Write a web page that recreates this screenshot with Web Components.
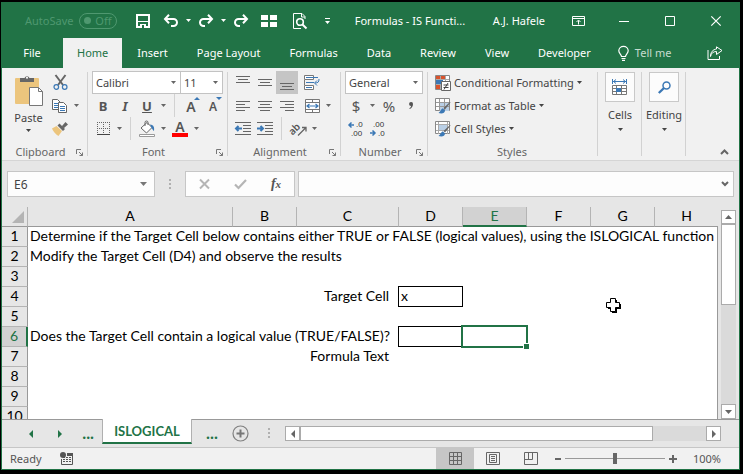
<!DOCTYPE html>
<html lang="en">
<head>
<meta charset="utf-8">
<title>Formulas - IS Functions</title>
<style>
  html, body { height: 100%; }
  body {
    margin: 0; padding: 2px 3px 4px 1px; box-sizing: border-box; background: #000;
    font: 11px/16px "Noto Sans", "Open Sans", sans-serif; color: #444;
    --green: #217346; --ribbon: #f1f1f1; --chrome: #e6e6e6; --line: #c6c6c6; --ink: #595959;
    --sheet-font: Lato, "Open Sans", sans-serif;
  }
</style>
</head>
<body>
<xl-window>
  <xl-titlebar user="A.J. Hafele">Formulas - IS Functi...</xl-titlebar>
  <xl-menu></xl-menu>
  <xl-ribbon></xl-ribbon>
  <xl-formula-bar cell="E6"></xl-formula-bar>
  <xl-sheet></xl-sheet>
  <xl-sheet-tabs>ISLOGICAL</xl-sheet-tabs>
  <xl-status>Ready</xl-status>
</xl-window>

<script>
const BASE = `
  :host, *, *::before, *::after { box-sizing: border-box; }
  button { font: inherit; color: inherit; background: none; border: 0; padding: 0; margin: 0;
    display: inline-flex; align-items: center; justify-content: center; white-space: nowrap; }
  select, input { font: inherit; color: inherit; border-radius: 0; margin: 0; outline: 0; }
`;
function define(name, css, html) {
  customElements.define(name, class extends HTMLElement {
    constructor() {
      super();
      this.attachShadow({ mode: 'open' }).innerHTML =
        `<style>${BASE}${css}</style>` + (typeof html === 'function' ? html(this) : html);
    }
  });
}

/* Icons: [width, height, markup] */
const G = '#666';
const lines = (a, c = G) => a.map(([x, y, w]) => `<rect x="${x}" y="${y}" width="${w}" height="1" fill="${c}"/>`).join('');
const brush = `<path d="M15.500 4.500 10 11.500l-1.500-1.500L15 4z" fill="#666"/><path d="M8 10.500c-2 0-2 2.500-4.500 4.500 3 1 6.500.5 6.500-2.500z" fill="#3b78b5"/>`;
const ICONS = {
  save: [14, 14, `<path d="M1 1h12v12H1z" fill="none" stroke="#fff" stroke-width="2"/><path d="M2 7h10v1H2zM4 10h6v4H4z" fill="#fff"/><path d="M6 11h2v3H6z" fill="#217346"/>`],
  undo: [16, 13, `<path d="M2 5h8.500a3.500 3.500 0 0 1 0 7H8" fill="none" stroke="#fff" stroke-width="2"/><path d="M6 .8 2 5l4 4.200" fill="none" stroke="#fff" stroke-width="2"/>`],
  redo: [16, 13, `<path d="M14 5H5.500a3.500 3.500 0 0 0 0 7H7" fill="none" stroke="#fff" stroke-width="2"/><path d="M10 .8 14 5l-4 4.200" fill="none" stroke="#fff" stroke-width="2"/>`],
  freeze: [16, 12, `<path d="M0 0h7v5H0zM9 0h7v5H9zM0 7h7v5H0zM9 7h7v5H9z" fill="#fff"/>`],
  preview: [14, 16, `<path d="M12 6V3.500L9 .5H.5v15H8" fill="none" stroke="#fff"/><path d="M8.500 1v3H12" fill="none" stroke="#fff"/><circle cx="7" cy="9" r="3.300" fill="none" stroke="#fff" stroke-width="1.600"/><path d="m9.500 11.500 4 4" stroke="#fff" stroke-width="2"/>`],
  more: [5, 6, `<path d="M0 0h5v1H0zM0 3h5L2.500 6z" fill="#fff"/>`],
  caret: [5, 3, `<path d="M0 0h5L2.500 3z" fill="currentColor"/>`],
  ribbonopt: [13, 10, `<path d="M.5.5h12v9H.5zM1 2.500h11" fill="none" stroke="#fff"/><path d="M6.500 8.500v-4M4.500 6l2-2 2 2" fill="none" stroke="#fff"/>`],
  min: [10, 10, `<path d="M0 5h10v1H0z" fill="#fff"/>`],
  max: [10, 10, `<path d="M.5.500h9v9h-9z" fill="none" stroke="#fff"/>`],
  close: [10, 10, `<path d="m.3.300 9.400 9.400M9.700.300.300 9.700" stroke="#fff" stroke-width="1.200"/>`],
  bulb: [11, 15, `<path d="M3.500 10.500C3.500 8.500.8 7.500.8 4.800a4.500 4.300 0 0 1 9.400 0c0 2.700-2.700 3.700-2.700 5.700zM3.500 12.500h4M4 14.300h3" fill="none" stroke="#fff" stroke-width="1.200"/>`],
  share: [16, 14, `<path d="M1 4v9.500h11.500V10" fill="none" stroke="#fff"/><path d="M3.500 10.500c.5-3.500 3-5 6-5V8.500l5.500-4L9.500.8V3C6 3.500 3.500 6 3.500 10.500z" fill="none" stroke="#fff"/>`],
  paste: [28, 32, `<rect y="3" width="24" height="26" rx="1" fill="#ecc57d"/><path d="M5 7V3h4.500a2.700 2.700 0 0 1 5 0H19v4z" fill="#666"/><circle cx="12" cy="2.800" r="1" fill="#fff"/><path d="M14.500 12.500h9l4 4v14h-13z" fill="#fff" stroke="#777"/><path d="M23.500 12.500v4h4" fill="none" stroke="#777"/>`],
  cut: [15, 15, `<path d="M2.500 0 10 10M12.500 0 5 10" stroke="#666" stroke-width="2"/><circle cx="3.300" cy="12" r="2.300" fill="none" stroke="#3b78b5" stroke-width="1.200"/><circle cx="11.700" cy="12" r="2.300" fill="none" stroke="#3b78b5" stroke-width="1.200"/>`],
  copy: [16, 14, `<path d="M.5.500h5l3 3v7h-8z" fill="#fff" stroke="#666"/><path d="M2 4.500h4M2 6.500h4M2 8.500h4" stroke="#3b78b5"/><path d="M6.500 3.500h5l3 3v7h-8z" fill="#fff" stroke="#666"/><path d="M8 7.500h5M8 9.500h5M8 11.500h5" stroke="#3b78b5"/>`],
  painter: [16, 14, `<path d="M0 6.500 4.500 4l5.500 5-3.500 5C4 12.500 1.500 10 0 6.500z" fill="#ecc57d"/><path d="m5.500 3.500 5.500 5.500 2-2L7.500 1.500zM10 4 13.500 0 16 2.500 12 6z" fill="#666"/>`],
  borders: [13, 13, `<path d="M.5 0v13M6.500 0v13M12.500 0v13M0 .5h13M0 6.500h13" stroke="#666" stroke-dasharray="1 1"/><path d="M0 12h13v1H0z" fill="#444"/>`],
  fill: [16, 16, `<path d="m2 7 6-5.500 5 5L7.500 12z" fill="#fff" stroke="#666"/><path d="M6 5V1.500a1.500 1.500 0 0 1 3 0V4" fill="none" stroke="#666"/><path d="M11 3.500c4 .5 4.500 3 4 6.500-1-.5-1.500-2-2.500-3z" fill="#3b78b5"/><path d="M.5 13.500h15v2H.5z" fill="#fff" stroke="#999"/>`],
  top: [14, 15, lines([[0, 1, 14], [2, 4, 10], [0, 7, 14]])],
  middle: [14, 15, lines([[0, 4, 14], [2, 7, 10], [0, 10, 14]])],
  bottom: [14, 15, lines([[0, 8, 14], [2, 11, 10], [0, 14, 14]])],
  left: [14, 11, lines([[0, 1, 14], [0, 4, 9], [0, 7, 14], [0, 10, 9]])],
  center: [14, 11, lines([[0, 1, 14], [2, 4, 10], [0, 7, 14], [2, 10, 10]])],
  right: [14, 11, lines([[0, 1, 14], [5, 4, 9], [0, 7, 14], [5, 10, 9]])],
  wrap: [16, 15, `<path d="M.5.5h9v4h-9zM.5 10.500h9v4h-9zM.5 5v5" fill="#fff" stroke="#777"/><path d="M2 2.500h12M2 7.500h8M2 12.500h6" stroke="#3b78b5"/><path d="M15 4c0 3-1 4-4 4M13 5.500 10.500 8l2.500 2.500" fill="none" stroke="#3b78b5"/>`],
  merge: [15, 14, `<path d="M.5.5h14v13H.5zM.5 3.500h14M.5 10.500h14M7.500.5v3M7.500 10.500v3" fill="#fff" stroke="#777"/><path d="M2 7h11M4.500 5 2 7l2.500 2M10.500 5 13 7l-2.500 2" fill="none" stroke="#3b78b5" stroke-width="1.200"/>`],
  outdent: [16, 13, lines([[0, 0, 16], [8, 3, 8], [8, 6, 8], [8, 9, 8], [0, 12, 16]]) + `<path d="M7 6.500H1M3.500 4 1 6.500 3.500 9" fill="none" stroke="#3b78b5" stroke-width="2"/>`],
  indent: [16, 13, lines([[0, 0, 16], [8, 3, 8], [8, 6, 8], [8, 9, 8], [0, 12, 16]]) + `<path d="M0 6.500h6M3.500 4 6 6.500 3.500 9" fill="none" stroke="#3b78b5" stroke-width="2"/>`],
  orient: [17, 16, `<text x="-2" y="10" transform="rotate(-45 6 7)" font-family="Noto Sans, sans-serif" font-size="10" font-weight="600" fill="#555">ab</text><path d="M8 14.500 15.500 7M12 6.500h4v4" fill="none" stroke="#666" stroke-width="1.300"/>`],
  comma: [4, 7, `<path d="M2 0a1.900 1.900 0 0 1 2 2c0 2.500-1.200 4-3.200 5L.3 6.200C1.500 5.600 2 4.800 2 3.900A1.900 1.900 0 0 1 2 0z" fill="#555"/>`],
  decinc: [16, 16, `<path d="M6 4H1M3.500 1.500 1 4l2.500 2.500" fill="none" stroke="#3b78b5" stroke-width="1.500"/><g font-family="Liberation Sans, sans-serif" font-size="8" fill="#333"><text x="8" y="6">.0</text><text x="3" y="15">.00</text></g>`],
  decdec: [16, 16, `<path d="M0 12h5M2.500 9.500 5 12l-2.500 2.500" fill="none" stroke="#3b78b5" stroke-width="1.500"/><g font-family="Liberation Sans, sans-serif" font-size="8" fill="#333"><text x="3" y="6">.00</text><text x="8" y="15">.0</text></g>`],
  cond: [16, 16, `<path d="M.5.500h14v14H.5z" fill="#fff" stroke="#888"/><path d="M5.500 1v13M10.500 1v13M1 4.500h13M1 9.500h13" stroke="#aaa"/><path d="M1 1h4v3H1zM6 1h4v3H6zM1 10h4v4H1z" fill="#d9532c"/><path d="M1 5h7v4H1z" fill="#3b78b5"/><path d="M6.500 6.500h9v9h-9z" fill="#fff" stroke="#666"/><path d="M8.500 10h5M8.500 12.500h5M13 8l-4 6.500" stroke="#444"/>`],
  table: [16, 16, `<path d="M.5.500h14v12H.5z" fill="#fff" stroke="#888"/><path d="M5 5h9v8H5z" fill="#b9cfe6"/><path d="M4.500 1v12M9.500 1v12M1 4.500h13M1 8.500h13" stroke="#999"/>${brush}`],
  cellstyle: [16, 16, `<path d="M.5.500h14v12H.5z" fill="#fff" stroke="#888"/><path d="M4 4h8v6H4z" fill="#b9cfe6"/><path d="M3.500 1v12M12.500 1v12M1 3.500h13M1 9.500h13" stroke="#aaa"/>${brush}`],
  cells: [16, 17, `<path d="M1 2.500h13M4 .5 1.500 2.500 4 4.500M11 .5l2.500 2L11 4.500M.5 0v5M14.500 0v5" fill="none" stroke="#3b78b5"/><path d="M.5 6.500h14v9H.5zM4.500 6.500v9M9.500 6.500v9M.5 9.500h14M.5 12.500h14" fill="#fff" stroke="#777"/><path d="M4 9h5v4H4z" fill="#3b78b5"/>`],
  find: [13, 13, `<circle cx="8.500" cy="4.500" r="3.500" fill="none" stroke="#3b78b5" stroke-width="1.500"/><path d="M6 7 .8 12" stroke="#3b78b5" stroke-width="2.400"/>`],
  launcher: [7, 7, `<path d="M.5 5V.500H5M3 3l3.500 3.500M6.500 3.500v3h-3" fill="none" stroke="#777"/>`],
  up: [9, 6, `<path d="m1 5 3.500-3.500L8 5" fill="none" stroke="#666" stroke-width="2"/>`],
  down: [8, 6, `<path d="m1 1 3 3 3-3" fill="none" stroke="#666" stroke-width="2"/>`],
  cancel: [11, 10, `<path d="m1 .5 9 9M10 .5l-9 9" stroke="#b5b5b5" stroke-width="2"/>`],
  enter: [13, 10, `<path d="m1 5.500 3.500 3.500L12 1" fill="none" stroke="#b5b5b5" stroke-width="2.200"/>`],
  dots: [2, 11, `<path d="M0 0h2v2H0zM0 4h2v2H0zM0 8h2v2H0z" fill="#b0b0b0"/>`],
  prev: [4, 8, `<path d="M4 0v8L0 4z" fill="currentColor"/>`],
  next: [4, 8, `<path d="M0 0v8l4-4z" fill="currentColor"/>`],
  drop: [7, 4, `<path d="M0 0h7L3.500 4z" fill="#777"/>`],
  sup: [7, 4, `<path d="M0 4h7L3.500 0z" fill="#666"/>`],
  sdown: [7, 4, `<path d="M0 0h7L3.500 4z" fill="#666"/>`],
  add: [17, 17, `<circle cx="8.500" cy="8.500" r="7.500" fill="none" stroke="#808080" stroke-width="1.200"/><path d="M4.500 7.500h8v2h-8zM7.500 4.500h2v8h-2z" fill="#777"/>`],
  macro: [13, 13, `<circle cx="3" cy="3" r="3" fill="#555"/><path d="M7 1h6v3H7z" fill="#555"/><path d="M1.500 7v5.500h11V4" fill="none" stroke="#555"/><path d="M3 7.500h8M3 9.500h8M3 5.500h8" stroke="#555" stroke-dasharray="2 1"/>`],
  normal: [13, 13, `<path d="M.5.500h12v12H.5zM4.500.500v12M8.500.500v12M.5 4.500h12M.5 8.500h12" fill="none" stroke="#666"/>`],
  page: [14, 13, `<path d="M.5.500h13v12H.5zM3.500 2.500h7v8h-7z" fill="none" stroke="#666"/><path d="M5 4.500h4M5 6.500h4M5 8.500h4" stroke="#666"/>`],
  breaks: [14, 13, `<path d="M.5.500h13v12H.5zM4.500.500v7M.5 7.500h8v-7" fill="none" stroke="#666"/>`],
  minus: [6, 6, `<path d="M0 2h6v2H0z" fill="#666"/>`],
  plus: [8, 8, `<path d="M0 3h8v2H0zM3 0h2v8H3z" fill="#666"/>`],
  corner: [12, 12, `<path d="M12 0v12H0z" fill="#b4b4b4"/>`],
  cross: [15, 15, `<path d="M5 1h5v4h4v5h-4v4H5v-4H1V5h4z" transform="translate(1 1)" fill="#000"/><path d="M4.500.500h5v4h4v5h-4v4h-5v-4h-4v-5h4z" fill="#fff" stroke="#000"/>`],
};
customElements.define('xl-icon', class extends HTMLElement {
  constructor() {
    super();
    const [w, h, body] = ICONS[this.getAttribute('name')];
    this.attachShadow({ mode: 'open' }).innerHTML =
      `<style>:host { display: inline-block; line-height: 0; flex: none; } svg { display: block; overflow: visible; }</style>
       <svg width="${w}" height="${h}" viewBox="0 0 ${w} ${h}" aria-hidden="true">${body}</svg>`;
  }
});
const icon = n => `<xl-icon name="${n}"></xl-icon>`;
const btn = (n, label, cls = '') => `<button class="${cls}" aria-label="${label}">${icon(n)}</button>`;
const caret = label => btn('caret', label + ' options', 'caret');

define('xl-window', `
  :host { display: flex; flex-direction: column; height: 100%;
    border: 1px solid var(--green); background: var(--chrome); overflow: hidden; }
`, '<slot></slot>');

define('xl-titlebar', `
  :host { display: flex; align-items: center; height: 35px; flex: none; background: var(--green); color: #fff; padding-left: 23px; }
  .auto { display: flex; align-items: center; gap: 6px; width: 104px; color: #4f9870; }
  .toggle { width: 38px; height: 16px; border: 1px solid #4f9870; border-radius: 8px; justify-content: space-between; padding: 0 5px 0 4px; }
  .toggle::before { content: ""; width: 7px; height: 7px; border-radius: 50%; background: #4f9870; }
  .qat { display: grid; grid-template-columns: 28px 28px 7px 28px 7px 28px 28px 34px 20px; height: 100%; }
  .name { flex: 1; text-align: center; white-space: nowrap; padding-right: 10px; }
  .user { margin-right: 10px; white-space: nowrap; }
  .win { width: 46px; height: 30px; }
`, h => `
  <div class="auto"><span id="a">AutoSave</span><button class="toggle" aria-labelledby="a">Off</button></div>
  <div class="qat">${btn('save', 'Save')}${btn('undo', 'Undo')}${caret('Undo')}${btn('redo', 'Redo')}${caret('Redo')}${btn('redo', 'Repeat')}${btn('freeze', 'Freeze panes')}${btn('preview', 'Print preview')}${btn('more', 'Customize')}</div>
  <div class="name"><slot></slot></div>
  <div class="user">${h.getAttribute('user')}</div>
  ${btn('ribbonopt', 'Ribbon display', 'win')}${btn('min', 'Minimize', 'win')}${btn('max', 'Maximize', 'win')}${btn('close', 'Close', 'win')}`);

define('xl-menu', `
  :host { display: flex; height: 30px; flex: none; background: var(--green); color: #fff; gap: 1px; }
  button { padding: 0 14px; }
  .file { width: 60px; }
  .on { background: var(--ribbon); color: var(--green); }
  .tell { gap: 6px; color: #c6dccf; padding: 0 12px; }
  .share { margin-left: auto; padding: 0 16px; }
`, `<button class="file">File</button><button class="on">Home</button>` +
  ['Insert', 'Page Layout', 'Formulas', 'Data', 'Review', 'View', 'Developer'].map(t => `<button>${t}</button>`).join('') +
  `<button class="tell">${icon('bulb')}Tell me</button>${btn('share', 'Share', 'share')}`);

define('xl-group', `
  :host { display: flex; flex-direction: column; flex: none; padding-top: 3px; height: 92px; position: relative; color: #666; }
  :host::after { content: ""; position: absolute; right: 0; top: 4px; bottom: 4px; width: 1px; background: #d2d2d2; }
  .body { flex: 1; }
  .foot { display: flex; align-items: center; height: 16px; padding: 0 5px 0 0; }
  .foot span { flex: 1; text-align: center; padding-left: 3px; }
`, h => `<div class="body"><slot></slot></div>
  <div class="foot">${h.hasAttribute('label') ? `<span>${h.getAttribute('label')}</span>` : ''}${h.hasAttribute('dialog') ? btn('launcher', h.getAttribute('label') + ' settings') : ''}</div>`);

define('xl-ribbon', `
  :host { display: flex; height: 93px; flex: none; background: var(--ribbon); border-bottom: 1px solid #d5d5d5; color: #444; }
  .row { display: flex; align-items: center; height: 23px; }
  .pad { padding: 0 4px; }
  .t { width: 22px; height: 23px; color: #555; }
  .caret { width: 11px; height: 22px; color: #666; }
  .sel { background: #c5c5c5; }
  .sep { width: 1px; height: 23px; background: #d2d2d2; margin: 0 5px; }
  .gap { margin-left: 3px; }
  .clip { display: grid; grid-template-columns: 47px 1fr; }
  .paste { flex-direction: column; justify-content: flex-start; padding: 4px 0 0 6px; gap: 3px; color: #444; }
  .combo { position: relative; display: flex; align-items: center; height: 23px; }
  .combo + .combo { margin-left: -1px; }
  .combo xl-icon { position: absolute; right: 5px; color: #666; pointer-events: none; }
  select { appearance: none; width: 100%; height: 23px; border: 1px solid #c3c3c3; background: #fff; padding: 0 3px; color: #444; }
  .glyph { font-size: 13px; font-weight: 700; }
  .sz { position: relative; font-weight: 600; align-items: flex-end; line-height: 20px; }
  .sz::after { content: ""; position: absolute; right: 2px; top: 3px; border: 3px solid transparent; border-top: 0; border-bottom-color: #3b78b5; }
  .sz.dn::after { border-bottom: 0; border-top: 3px solid #3b78b5; }
  .big { font-size: 14px; } .small { font-size: 12px; }
  .color { flex-direction: column; font-size: 14px; line-height: 13px; font-weight: 600; }
  .color::after { content: ""; width: 16px; height: 4px; background: #f00; }
  .num { font-size: 15px; }
  .style { gap: 3px; height: 23px; color: #444; }
  .tall { flex-direction: column; width: 100%; padding-top: 1px; color: #444; gap: 5px; }
  .tile { width: 30px; height: 30px; border: 1px solid #c9c9c9; background: #fcfcfc; display: flex; align-items: center; justify-content: center; }
  .collapse { margin: auto 9px 2px auto; width: 12px; height: 12px; }
`, `
  <xl-group label="Clipboard" dialog style="width:86px"><div class="clip">
    <button class="paste">${icon('paste')}<span>Paste</span>${icon('caret')}</button>
    <div><div class="row">${btn('cut', 'Cut', 't')}</div><div class="row">${btn('copy', 'Copy', 't')}${caret('Copy')}</div><div class="row">${btn('painter', 'Format painter', 't')}</div></div>
  </div></xl-group>
  <xl-group label="Font" dialog style="width:140px"><div class="pad">
    <div class="row"><div class="combo" style="width:89px"><select aria-label="Font"><option>Calibri</option></select>${icon('caret')}</div><div class="combo" style="width:43px"><select aria-label="Font size"><option>11</option></select>${icon('caret')}</div></div>
    <div class="row"><button class="t glyph">B</button><button class="t glyph"><i>I</i></button><button class="t glyph"><u>U</u></button>${caret('Underline')}<span class="sep"></span><button class="t sz big">A</button><button class="t sz dn small">A</button></div>
    <div class="row">${btn('borders', 'Borders', 't')}${caret('Borders')}<span class="sep"></span>${btn('fill', 'Fill color', 't')}${caret('Fill')}<button class="t color">A</button>${caret('Font color')}</div>
  </div></xl-group>
  <xl-group label="Alignment" dialog style="width:113px"><div class="pad">
    <div class="row">${btn('top', 'Top align', 't')}${btn('middle', 'Middle align', 't')}${btn('bottom', 'Bottom align', 't sel')}${btn('wrap', 'Wrap text', 't gap')}</div>
    <div class="row">${btn('left', 'Align left', 't')}${btn('center', 'Center', 't')}${btn('right', 'Align right', 't')}${btn('merge', 'Merge and center', 't gap')}${caret('Merge')}</div>
    <div class="row">${btn('outdent', 'Decrease indent', 't')}${btn('indent', 'Increase indent', 't')}<span class="sep"></span>${btn('orient', 'Orientation', 't')}${caret('Orientation')}</div>
  </div></xl-group>
  <xl-group label="Number" dialog style="width:87px"><div class="pad">
    <div class="row"><div class="combo" style="width:78px"><select aria-label="Number format"><option>General</option></select>${icon('caret')}</div></div>
    <div class="row"><button class="t num">$</button>${caret('Currency')}<button class="t num">%</button>${btn('comma', 'Comma style', 't')}</div>
    <div class="row">${btn('decinc', 'Increase decimal', 't')}${btn('decdec', 'Decrease decimal', 't')}</div>
  </div></xl-group>
  <xl-group label="Styles" style="width:170px"><div style="padding-left:7px">
    <div class="row"><button class="style">${icon('cond')}Conditional Formatting${icon('caret')}</button></div>
    <div class="row"><button class="style">${icon('table')}Format as Table${icon('caret')}</button></div>
    <div class="row"><button class="style">${icon('cellstyle')}Cell Styles${icon('caret')}</button></div>
  </div></xl-group>
  <xl-group style="width:44px"><button class="tall"><span class="tile">${icon('cells')}</span>Cells${icon('caret')}</button></xl-group>
  <xl-group style="width:44px"><button class="tall"><span class="tile">${icon('find')}</span>Editing${icon('caret')}</button></xl-group>
  ${btn('up', 'Collapse ribbon', 'collapse')}`);

define('xl-formula-bar', `
  :host { display: flex; flex: none; padding: 10px 5px; background: var(--chrome); }
  .box { height: 26px; border: 1px solid var(--line); background: #fdfdfd; display: flex; align-items: center; }
  input { border: 0; background: none; min-width: 0; flex: 1; height: 100%; padding: 0 6px; color: #444; font-size: 12px; }
  .name { width: 148px; padding-right: 7px; }
  .grip { width: 30px; display: flex; justify-content: center; align-items: center; }
  .acts { width: 110px; margin-right: 3px; }
  .acts button { flex: 1; }
  .fx { font: italic 700 14px/16px "Liberation Serif", serif; color: #555; }
  .fx small { font-size: 11px; }
  .formula { flex: 1; padding-right: 4px; }
`, h => `
  <div class="box name"><input aria-label="Name box" value="${h.getAttribute('cell')}">${icon('drop')}</div>
  <div class="grip">${icon('dots')}</div>
  <div class="box acts">${btn('cancel', 'Cancel')}${btn('enter', 'Enter')}<button class="fx">f<small>x</small></button></div>
  <div class="box formula"><input aria-label="Formula">${btn('down', 'Expand formula bar')}</div>`);

const cols = 'ABCDEFGH'.split('');
const empty = n => '<td></td>'.repeat(n);
const rows = {
  1: '<td colspan="8">Determine if the Target Cell below contains either TRUE or FALSE (logical values), using the ISLOGICAL function</td>',
  2: '<td colspan="8">Modify the Target Cell (D4) and observe the results</td>',
  4: '<td colspan="3" class="r">Target Cell</td><td class="box">x</td>' + empty(4),
  6: '<td colspan="3" class="r">Does the Target Cell contain a logical value (TRUE/FALSE)?</td><td class="box"></td><td class="cur"></td>' + empty(3),
  7: '<td colspan="3" class="r">Formula Text</td>' + empty(5),
};
define('xl-sheet', `
  :host { display: flex; flex: 1; min-height: 0; background: var(--chrome); }
  .view { flex: 1; overflow: hidden; min-width: 0; position: relative; }
  table { table-layout: fixed; border-collapse: separate; border-spacing: 0; width: 100%; font: 14px/17px var(--sheet-font); color: #000; }
  th, td { padding: 0; height: 20px; font-weight: 400; white-space: nowrap; vertical-align: top; }
  thead th { background: var(--chrome); border-bottom: 1px solid #999; border-right: 1px solid #b4b4b4; }
  thead th:last-child { border-right: 0; }
  thead th.on { background: #d2d2d2; color: var(--green); border-bottom: 2px solid var(--green); }
  thead xl-icon { display: block; margin: 4px 0 0 10px; }
  tbody th { background: var(--chrome); border-bottom: 1px solid #b4b4b4; border-right: 1px solid #999; }
  tbody th.on { background: #d2d2d2; color: var(--green); border-right: 2px solid var(--green); }
  td { background: #fff; padding-left: 2px; }
  td:last-child { border-right: 1px solid #999; }
  .r { text-align: right; padding-right: 10px; }
  .box { position: relative; box-shadow: inset -1px -1px #000, -1px 0 #000, 0 -1px #000, -1px -1px #000; }
  .cur { position: relative; z-index: 1; }
  .cur::before { content: ""; position: absolute; inset: -2px -1px -1px -2px; border: 2px solid var(--green); }
  .cur::after { content: ""; position: absolute; right: -3px; bottom: -3px; width: 7px; height: 7px; background: var(--green); border: 1px solid #fff; }
  .pointer { position: absolute; left: 604px; top: 91px; }
  .scroll { width: 15px; margin: 3px 3px 0; display: flex; flex-direction: column; background: #dadada; }
  .scroll button, .thumb { background: #fff; border: 1px solid #ababab; }
  .scroll button { height: 14px; }
  .thumb { height: 81px; }
  .scroll .end { margin-top: auto; height: 15px; }
`, `
  <div class="view"><table>
    <colgroup><col style="width:26px"><col style="width:205px"><col style="width:64px"><col style="width:102px"><col style="width:64px"><col style="width:64px"><col style="width:64px"><col style="width:64px"><col></colgroup>
    <thead><tr><th>${icon('corner')}</th>${cols.map(c => `<th${c === 'E' ? ' class="on"' : ''}>${c}</th>`).join('')}</tr></thead>
    <tbody>${[1, 2, 3, 4, 5, 6, 7, 8, 9, 10].map(n => `<tr><th${n === 6 ? ' class="on"' : ''}>${n}</th>${rows[n] || empty(8)}</tr>`).join('')}</tbody>
  </table><div class="pointer">${icon('cross')}</div></div>
  <div class="scroll">${btn('sup', 'Scroll up')}<div class="thumb"></div>${btn('sdown', 'Scroll down', 'end')}</div>`);

define('xl-sheet-tabs', `
  :host { display: flex; align-items: center; flex: none; height: 28px; border-top: 1px solid #999; background: var(--chrome); color: var(--green); padding-right: 18px; }
  .nav { width: 29px; height: 26px; }
  .lead { display: flex; width: 100px; padding-left: 15px; }
  .dots { font: 700 14px/20px "Noto Sans", sans-serif; width: 28px; }
  .tab { align-self: flex-start; margin-top: -1px; height: 25px; width: 90px; background: #fff; border: solid #b0b0b0; border-width: 0 1px; border-bottom: 2px solid var(--green); font: 700 13px/20px Lato, sans-serif; }
  .after { width: 40px; }
  .add { width: 17px; height: 17px; margin-right: 19px; }
  .grip { width: 17px; display: flex; }
  .scroll { flex: 1; display: flex; height: 15px; background: #dadada; color: #666; }
  .scroll button, .thumb { background: #fff; border: 1px solid #ababab; }
  .scroll button { width: 15px; }
  .thumb { flex: 0 1 353px; }
  .end { margin-left: auto; }
`, `
  <div class="lead">${btn('prev', 'Previous sheet', 'nav')}${btn('next', 'Next sheet', 'nav')}<button class="dots">...</button></div>
  <button class="tab"><slot></slot></button>
  <button class="dots after">...</button>
  ${btn('add', 'New sheet', 'add')}
  <div class="grip">${icon('dots')}</div>
  <div class="scroll">${btn('prev', 'Scroll left')}<div class="thumb"></div>${btn('next', 'Scroll right', 'end')}</div>`);

define('xl-status', `
  :host { display: flex; align-items: center; flex: none; height: 22px; background: var(--ribbon); border-top: 1px solid var(--line); padding: 0 18px 0 8px; color: #555; }
  .rec { margin: 0 auto 0 18px; }
  .view { width: 38px; height: 21px; }
  .sel { background: #c6c6c6; }
  .z { width: 15px; height: 20px; }
  input { appearance: none; width: 100px; height: 11px; padding: 0; background: linear-gradient(#999, #999) center / 100% 1px no-repeat; }
  input::-webkit-slider-thumb { appearance: none; width: 4px; height: 11px; background: #666; border: 0; border-radius: 0; }
  .pct { width: 41px; text-align: right; }
`, `
  <span><slot></slot></span>${btn('macro', 'Record macro', 'rec')}
  ${btn('normal', 'Normal view', 'view sel')}${btn('page', 'Page layout view', 'view')}${btn('breaks', 'Page break preview', 'view')}
  ${btn('minus', 'Zoom out', 'z')}<input type="range" aria-label="Zoom" min="10" max="190" value="100">${btn('plus', 'Zoom in', 'z')}
  <span class="pct">100%</span>`);
</script>
</body>
</html>
